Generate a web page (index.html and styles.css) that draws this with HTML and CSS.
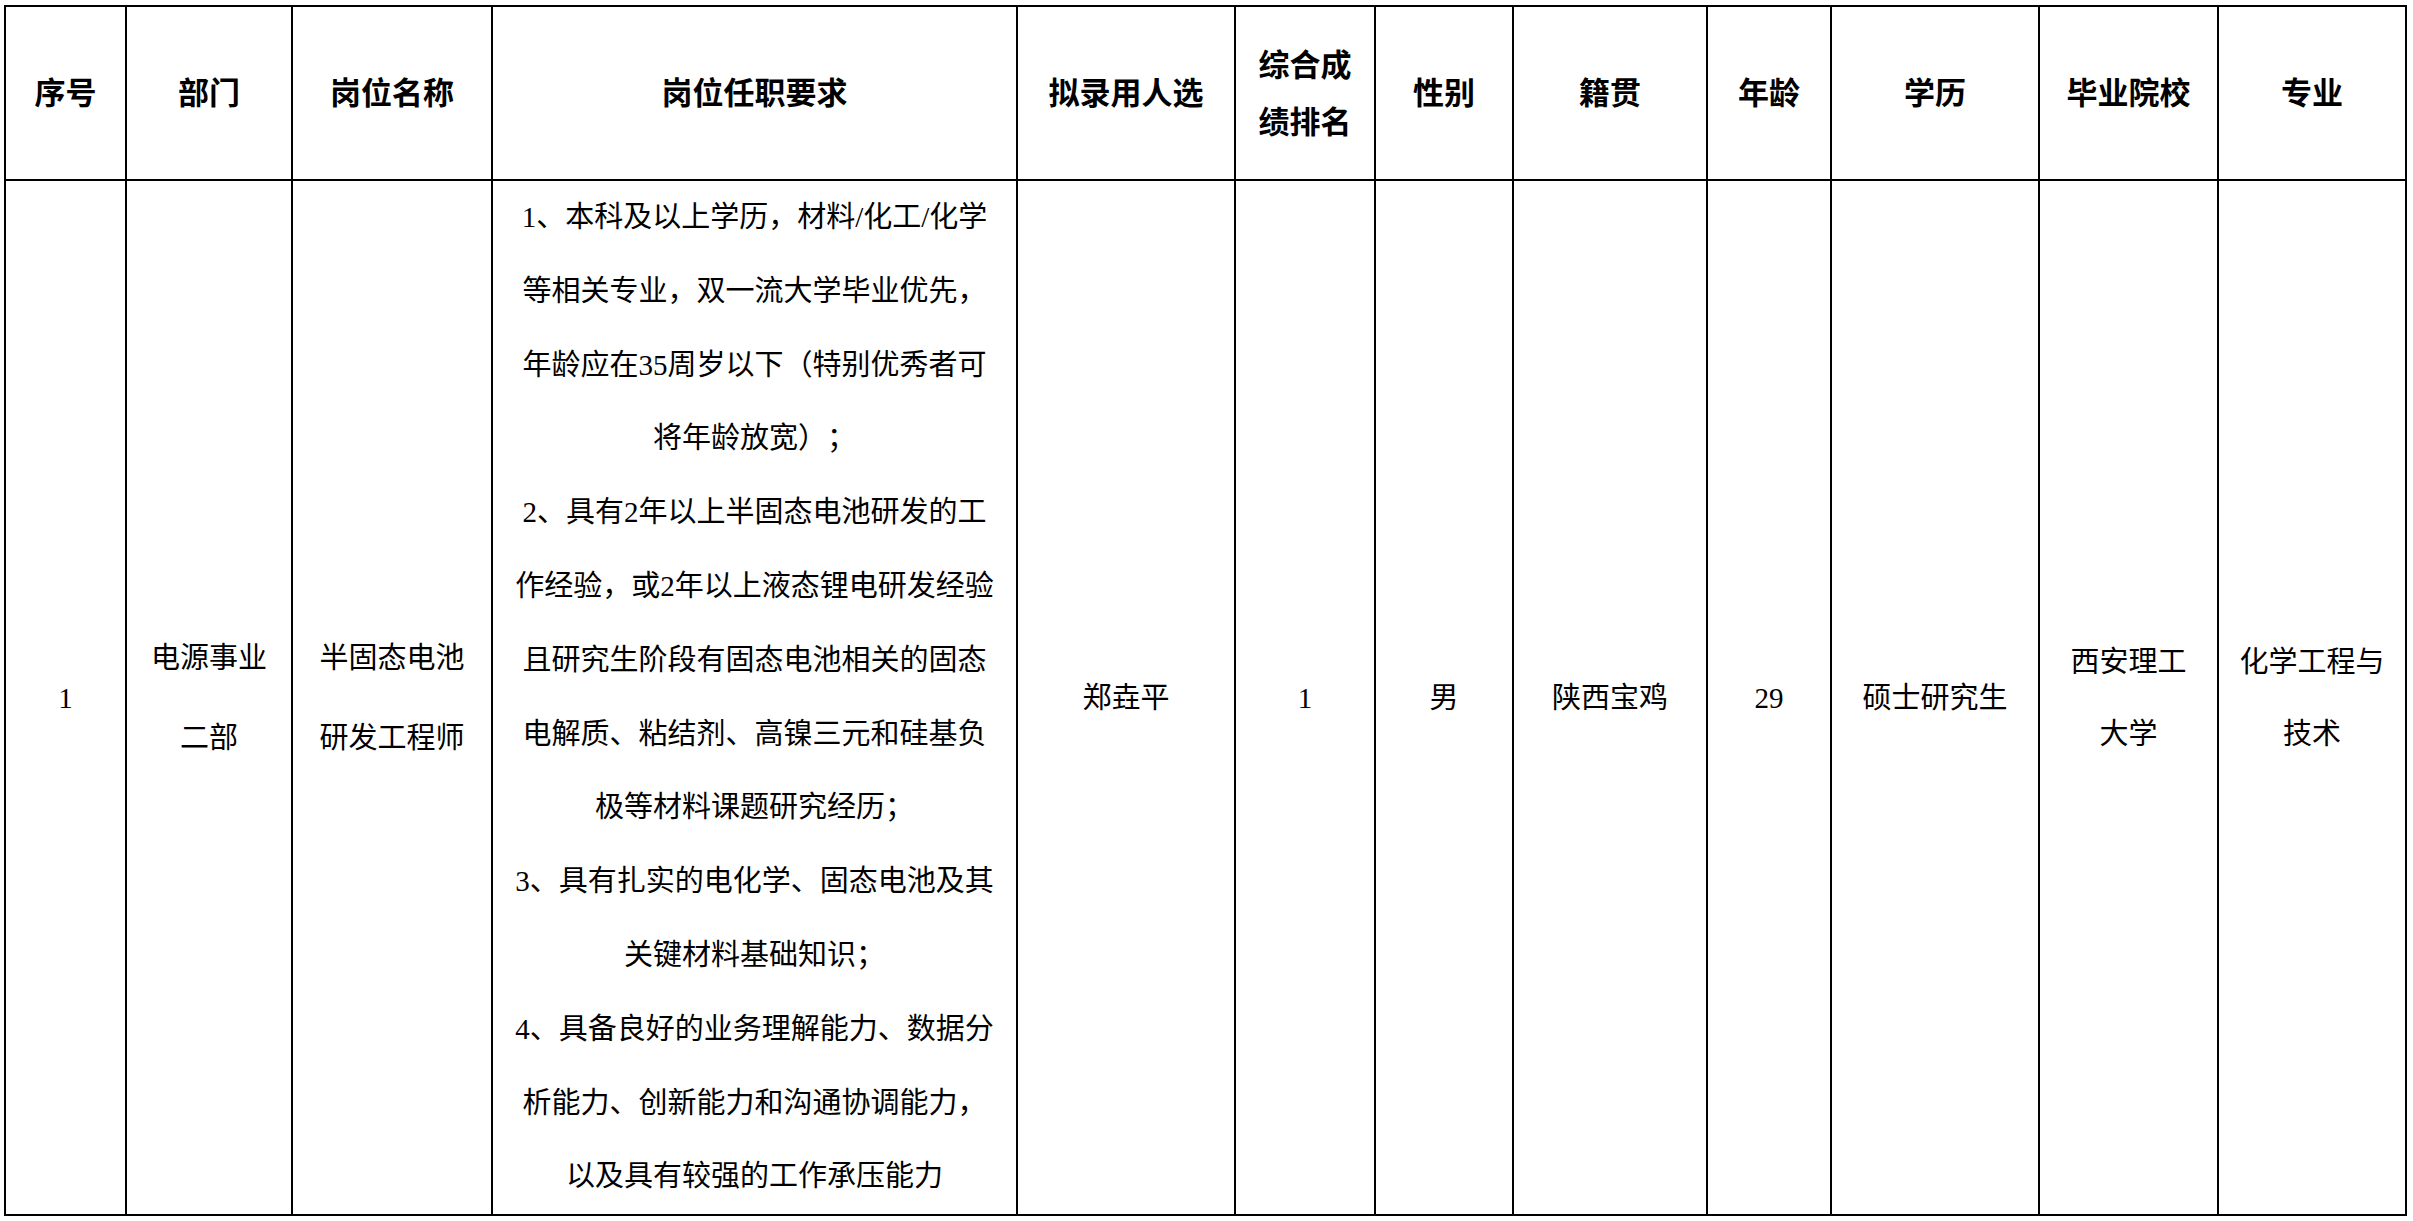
FILE: index.html
```html
<!DOCTYPE html>
<html lang="zh-CN">
<head>
<meta charset="utf-8">
<title>拟录用人选公示</title>
<link rel="stylesheet" href="styles.css">
</head>
<body>
<div class="sheet">
  <div class="th">序号</div>
  <div class="th">部门</div>
  <div class="th">岗位名称</div>
  <div class="th">岗位任职要求</div>
  <div class="th">拟录用人选</div>
  <div class="th th-two">综合成<br>绩排名</div>
  <div class="th">性别</div>
  <div class="th">籍贯</div>
  <div class="th">年龄</div>
  <div class="th">学历</div>
  <div class="th">毕业院校</div>
  <div class="th">专业</div>

  <div class="td">1</div>
  <div class="td td-wide">电源事业<br>二部</div>
  <div class="td td-wide">半固态电池<br>研发工程师</div>
  <div class="td td-req">1、本科及以上学历，材料/化工/化学<br>等相关专业，双一流大学毕业优先，<br>年龄应在35周岁以下（特别优秀者可<br>将年龄放宽）；<br>2、具有2年以上半固态电池研发的工<br>作经验，或2年以上液态锂电研发经验<br>且研究生阶段有固态电池相关的固态<br>电解质、粘结剂、高镍三元和硅基负<br>极等材料课题研究经历；<br>3、具有扎实的电化学、固态电池及其<br>关键材料基础知识；<br>4、具备良好的业务理解能力、数据分<br>析能力、创新能力和沟通协调能力，<br>以及具有较强的工作承压能力</div>
  <div class="td">郑垚平</div>
  <div class="td">1</div>
  <div class="td">男</div>
  <div class="td">陕西宝鸡</div>
  <div class="td">29</div>
  <div class="td">硕士研究生</div>
  <div class="td td-mid">西安理工<br>大学</div>
  <div class="td td-mid">化学工程与<br>技术</div>
</div>
</body>
</html>
```

FILE: styles.css
```css
html, body {
  margin: 0;
  padding: 0;
  background: #ffffff;
}

body {
  font-family: "Liberation Serif", "Noto Sans CJK SC", serif;
  color: #000000;
  text-spacing-trim: space-all;
}

.sheet {
  margin: 5px 0 0 4px;
  width: 2403px;
  display: grid;
  grid-template-columns: 119px 164px 198px 523px 216px 138px 136px 192px 122px 206px 177px 186px;
  grid-template-rows: 172px 1033px;
  gap: 2px;
  padding: 2px;
  box-sizing: border-box;
  background: #000000;
}

.th,
.td {
  background: #ffffff;
  display: flex;
  align-items: center;
  justify-content: center;
  text-align: center;
  white-space: nowrap;
}

.th {
  font-family: "Noto Sans CJK SC", sans-serif;
  font-weight: 700;
  font-size: 31px;
  line-height: 40px;
  padding-bottom: 5px;
  box-sizing: border-box;
}

.th-two {
  line-height: 57px;
}

.td {
  font-size: 29px;
  line-height: 40px;
}

.td-wide {
  line-height: 80px;
}

.td-mid {
  line-height: 72px;
}

.td-req {
  line-height: 73.8px;
  align-items: flex-start;
}
```
